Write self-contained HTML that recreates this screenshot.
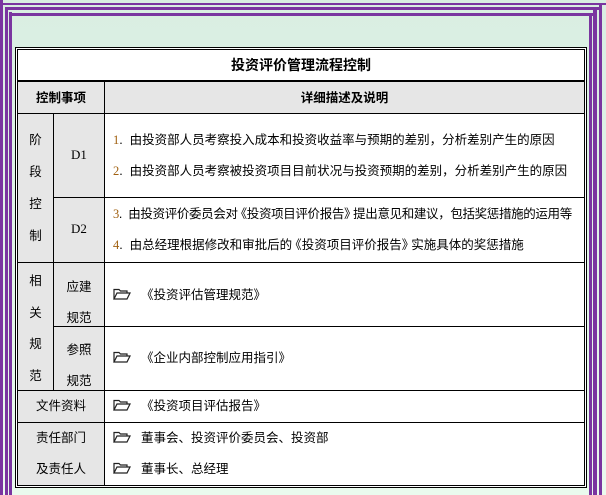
<!DOCTYPE html>
<html><head><meta charset="utf-8"><style>
*{margin:0;padding:0;box-sizing:border-box}
body{width:606px;height:495px;overflow:hidden;position:relative;background:linear-gradient(#d9eee2,#eafbee);font-family:"Liberation Sans","Noto Sans CJK SC",sans-serif;font-size:12.5px;color:#000}
.p{position:absolute;background:#7a35a0}
.a{position:absolute}
.g{background:#e6e6e6}
.l{position:absolute;background:#000}
.t{position:absolute;white-space:nowrap;line-height:16px}
.c{text-align:center}
.n{font-family:"Liberation Serif",serif;color:#a06010}
.f{display:inline-block;width:18px;height:12px;margin-right:10px;vertical-align:-1px}
.q{margin-left:-3px}
.q2{margin-right:-3px}
</style></head><body>
<div class="p" style="left:0;top:0;width:3px;height:495px"></div>
<div class="p" style="left:5px;top:7px;width:3px;height:488px"></div>
<div class="p" style="left:9px;top:12px;width:3px;height:483px"></div>
<div class="p" style="left:0;top:3px;width:606px;height:2px"></div>
<div class="p" style="left:5px;top:7px;width:594px;height:3px"></div>
<div class="p" style="left:9px;top:13px;width:586px;height:3px"></div>
<div class="p" style="left:599px;top:3px;width:3px;height:492px"></div>
<div class="p" style="left:593px;top:7px;width:4px;height:488px"></div>
<div class="p" style="left:589px;top:13px;width:3px;height:482px"></div>

<div class="a" style="left:15px;top:47px;width:572px;height:441px;border:1px solid #000;background:#fff"></div>
<div class="a" style="left:17px;top:49px;width:568px;height:437px;border:1px solid #000;background:#fff"></div>
<div class="a g" style="left:18px;top:82px;width:566px;height:31px"></div>
<div class="a g" style="left:18px;top:113px;width:86px;height:372px"></div>
<div class="l" style="left:17px;top:80px;width:568px;height:2px"></div>
<div class="l" style="left:17px;top:113px;width:568px;height:1px"></div>
<div class="l" style="left:53px;top:197px;width:532px;height:1px"></div>
<div class="l" style="left:17px;top:262px;width:568px;height:1px"></div>
<div class="l" style="left:53px;top:326px;width:532px;height:1px"></div>
<div class="l" style="left:17px;top:390px;width:568px;height:1px"></div>
<div class="l" style="left:17px;top:422px;width:568px;height:1px"></div>
<div class="l" style="left:104px;top:82px;width:1px;height:404px"></div>
<div class="l" style="left:53px;top:113px;width:1px;height:277px"></div>

<div class="t c" style="left:18px;top:57px;width:566px;font-weight:bold;font-size:14px">投资评价管理流程控制</div>
<div class="t c" style="left:18px;top:90px;width:86px;font-weight:bold">控制事项</div>
<div class="t c" style="left:105px;top:90px;width:479px;font-weight:bold">详细描述及说明</div>

<div class="t c" style="left:18px;top:124px;width:35px;line-height:32px;white-space:normal">阶<br>段<br>控<br>制</div>
<div class="t c n" style="left:54px;top:147px;width:50px;color:#000;font-size:13px">D1</div>
<div class="t c n" style="left:54px;top:221px;width:50px;color:#000;font-size:13px">D2</div>
<div class="t" style="left:113px;top:132px"><span class="n">1</span>.&nbsp; 由投资部人员考察投入成本和投资收益率与预期的差别，分析差别产生的原因</div>
<div class="t" style="left:113px;top:163px"><span class="n">2</span>.&nbsp; 由投资部人员考察被投资项目目前状况与投资预期的差别，分析差别产生的原因</div>
<div class="t" style="left:113px;top:206px;letter-spacing:-0.35px"><span class="n">3</span>.&nbsp; 由投资评价委员会对<span class="q">《</span>投资项目评价报告<span class="q2">》</span>提出意见和建议，包括奖惩措施的运用等</div>
<div class="t" style="left:113px;top:237px"><span class="n">4</span>.&nbsp; 由总经理根据修改和审批后的<span class="q">《</span>投资项目评价报告<span class="q2">》</span>实施具体的奖惩措施</div>

<div class="t c" style="left:18px;top:266px;width:35px;line-height:31.5px;white-space:normal">相<br>关<br>规<br>范</div>
<div class="t c" style="left:54px;top:272px;width:50px;line-height:31px;white-space:normal">应建<br>规范</div>
<div class="t c" style="left:54px;top:335px;width:50px;line-height:31px;white-space:normal">参照<br>规范</div>
<div class="t" style="left:113px;top:287px"><svg class="f" viewBox="0 0 18 12"><path d="M1 11V1.5h5l1.5 1.5H14v2" fill="none" stroke="#222" stroke-width="1.2"/><path d="M1 11L4 5h13l-3 6z" fill="#fff" stroke="#222" stroke-width="1.2"/></svg>《投资评估管理规范》</div>
<div class="t" style="left:113px;top:350px"><svg class="f" viewBox="0 0 18 12"><path d="M1 11V1.5h5l1.5 1.5H14v2" fill="none" stroke="#222" stroke-width="1.2"/><path d="M1 11L4 5h13l-3 6z" fill="#fff" stroke="#222" stroke-width="1.2"/></svg>《企业内部控制应用指引》</div>
<div class="t c" style="left:18px;top:398px;width:86px">文件资料</div>
<div class="t" style="left:113px;top:398px"><svg class="f" viewBox="0 0 18 12"><path d="M1 11V1.5h5l1.5 1.5H14v2" fill="none" stroke="#222" stroke-width="1.2"/><path d="M1 11L4 5h13l-3 6z" fill="#fff" stroke="#222" stroke-width="1.2"/></svg>《投资项目评估报告》</div>
<div class="t c" style="left:18px;top:430px;width:86px">责任部门</div>
<div class="t c" style="left:18px;top:461px;width:86px">及责任人</div>
<div class="t" style="left:113px;top:430px"><svg class="f" viewBox="0 0 18 12"><path d="M1 11V1.5h5l1.5 1.5H14v2" fill="none" stroke="#222" stroke-width="1.2"/><path d="M1 11L4 5h13l-3 6z" fill="#fff" stroke="#222" stroke-width="1.2"/></svg>董事会、投资评价委员会、投资部</div>
<div class="t" style="left:113px;top:461px"><svg class="f" viewBox="0 0 18 12"><path d="M1 11V1.5h5l1.5 1.5H14v2" fill="none" stroke="#222" stroke-width="1.2"/><path d="M1 11L4 5h13l-3 6z" fill="#fff" stroke="#222" stroke-width="1.2"/></svg>董事长、总经理</div>
</body></html>
